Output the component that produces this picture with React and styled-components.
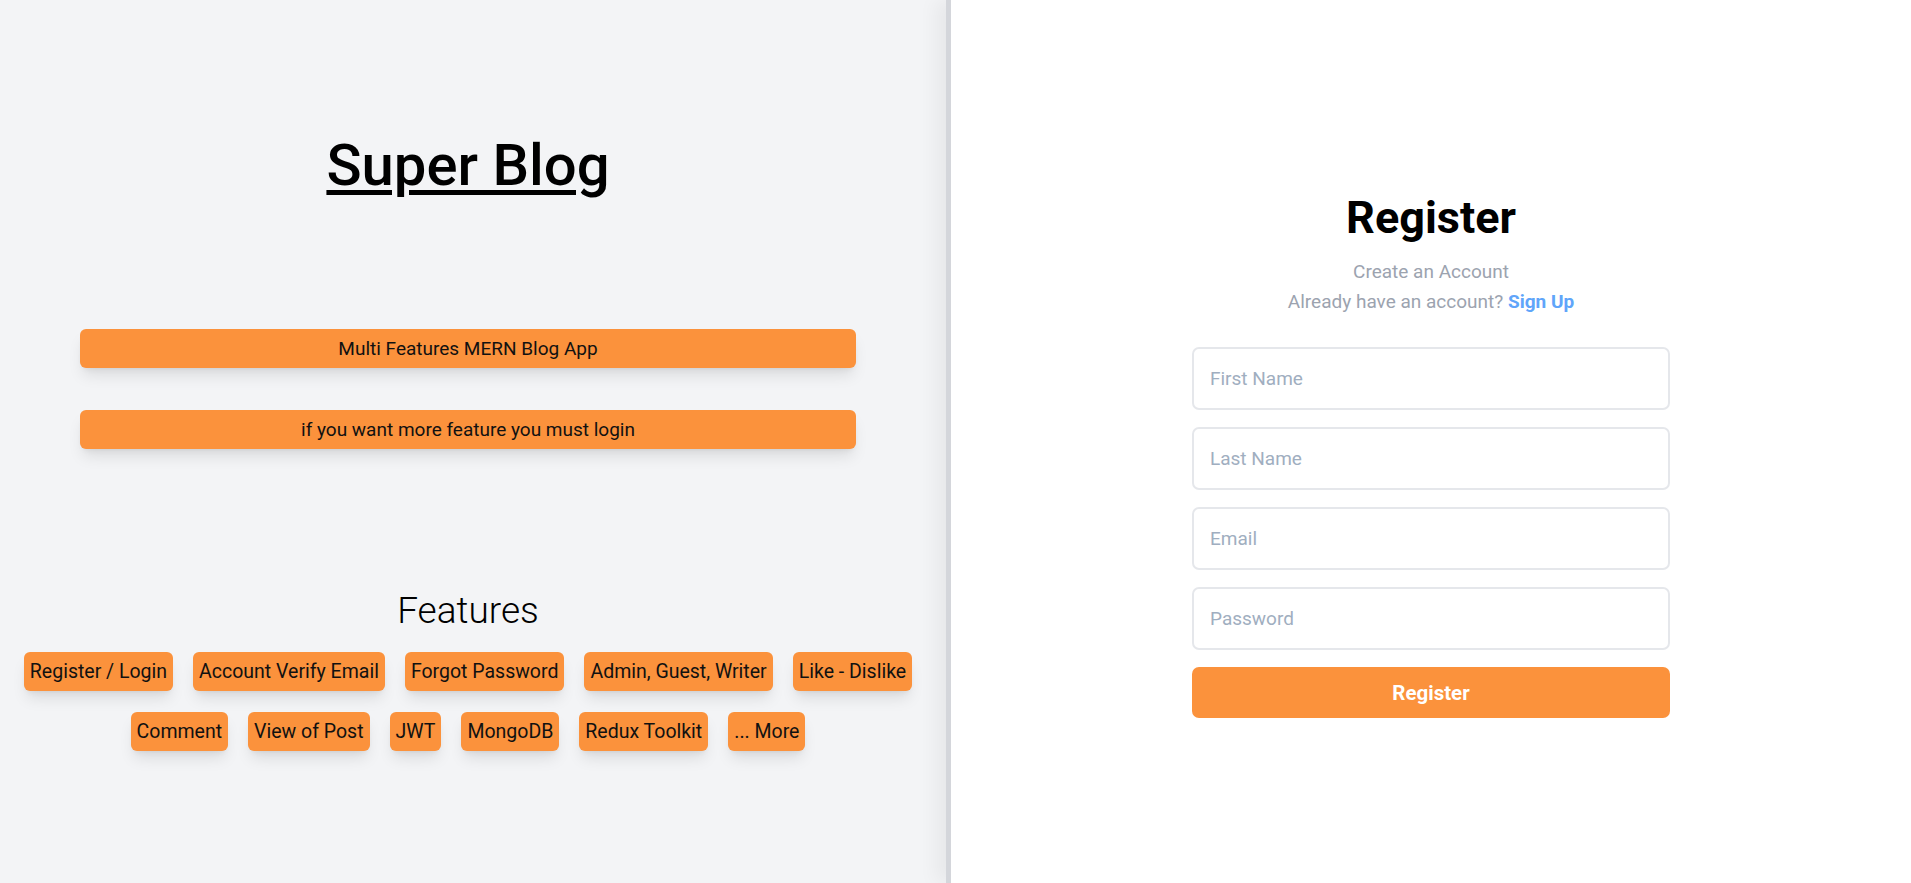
import React from "react";
import styled, { createGlobalStyle } from "styled-components";

const GlobalStyle = createGlobalStyle`
  * {
    box-sizing: border-box;
  }

  body {
    margin: 0;
    font-family: Roboto, "Liberation Sans", sans-serif;
    background: #ffffff;
  }
`;

const Page = styled.div`
  display: flex;
  min-height: 100vh;
  width: 100%;
`;

const Intro = styled.section`
  width: 946px;
  flex-shrink: 0;
  background-color: #f3f4f6;
  display: flex;
  flex-direction: column;
  align-items: center;
  padding: 136px 10px 0 0;
`;

const Title = styled.h1`
  margin: 0;
  font-size: 58px;
  line-height: 58px;
  font-weight: 500;
  color: #000;
  text-decoration: underline;
  text-decoration-thickness: 5px;
  text-underline-offset: 5px;
`;

const Banner = styled.div`
  width: 776px;
  height: 39px;
  margin-top: ${(p) => p.$gap}px;
  display: flex;
  align-items: center;
  justify-content: center;
  background-color: #fb923c;
  border-radius: 6px;
  font-size: 19px;
  color: #111;
  box-shadow: 0 10px 15px -3px rgba(0, 0, 0, 0.1),
    0 4px 6px -4px rgba(0, 0, 0, 0.1);
`;

const FeaturesTitle = styled.h2`
  margin: 140px 0 0;
  font-size: 37px;
  line-height: 44px;
  font-weight: 300;
  color: #000;
`;

const Chips = styled.ul`
  list-style: none;
  margin: 9px 0 0;
  padding: 0;
  display: flex;
  flex-wrap: wrap;
  justify-content: center;
  max-width: 936px;
`;

const Chip = styled.li`
  margin: 10px 10px 11px;
  height: 39px;
  padding: 0 6px;
  display: flex;
  align-items: center;
  background-color: #fb923c;
  border-radius: 6px;
  font-size: 19.5px;
  color: #111;
  box-shadow: 0 10px 15px -3px rgba(0, 0, 0, 0.1),
    0 4px 6px -4px rgba(0, 0, 0, 0.1);
`;

const FormSide = styled.section`
  flex: 1;
  background: #fff;
  border-left: 5px solid #d4d6db;
  box-shadow: -10px 0 18px rgba(0, 0, 0, 0.05);
  display: flex;
  justify-content: center;
  padding-top: 195px;
`;

const FormBox = styled.div`
  width: 478px;
  display: flex;
  flex-direction: column;
  align-items: center;
`;

const Heading = styled.h2`
  margin: 0;
  font-size: 45px;
  line-height: 45px;
  font-weight: 700;
  color: #000;
`;

const SubText = styled.p`
  margin: ${(p) => p.$top}px 0 0;
  font-size: 19px;
  line-height: 30px;
  color: #9ca3af;
`;

const SignLink = styled.a`
  color: #60a5fa;
  font-weight: 700;
  text-decoration: none;
  cursor: pointer;
`;

const Form = styled.form`
  width: 100%;
  margin-top: 30px;
  display: flex;
  flex-direction: column;
  gap: 17px;
`;

const Field = styled.input`
  width: 100%;
  height: 63px;
  padding: 0 16px;
  border: 2px solid #e5e7eb;
  border-radius: 7px;
  font-family: inherit;
  font-size: 19px;
  color: #111;
  outline: none;

  &::placeholder {
    color: #a0aec0;
  }
`;

const Submit = styled.button`
  width: 100%;
  height: 51px;
  border: none;
  border-radius: 7px;
  background-color: #fb923c;
  color: #fff;
  font-family: inherit;
  font-size: 20.5px;
  font-weight: 700;
  cursor: pointer;
`;

const features = [
  "Register / Login",
  "Account Verify Email",
  "Forgot Password",
  "Admin, Guest, Writer",
  "Like - Dislike",
  "Comment",
  "View of Post",
  "JWT",
  "MongoDB",
  "Redux Toolkit",
  "... More",
];

const App = () => {
  return (
    <>
      <GlobalStyle />
      <Page>
        <Intro>
          <Title>Super Blog</Title>
          <Banner $gap={135}>Multi Features MERN Blog App</Banner>
          <Banner $gap={42}>if you want more feature you must login</Banner>
          <FeaturesTitle>Features</FeaturesTitle>
          <Chips>
            {features.map((f) => (
              <Chip key={f}>{f}</Chip>
            ))}
          </Chips>
        </Intro>
        <FormSide>
          <FormBox>
            <Heading>Register</Heading>
            <SubText $top={17}>Create an Account</SubText>
            <SubText $top={0}>
              Already have an account? <SignLink>Sign Up</SignLink>
            </SubText>
            <Form onSubmit={(e) => e.preventDefault()}>
              <Field type="text" placeholder="First Name" />
              <Field type="text" placeholder="Last Name" />
              <Field type="email" placeholder="Email" />
              <Field type="password" placeholder="Password" />
              <Submit type="submit">Register</Submit>
            </Form>
          </FormBox>
        </FormSide>
      </Page>
    </>
  );
};

export default App;
